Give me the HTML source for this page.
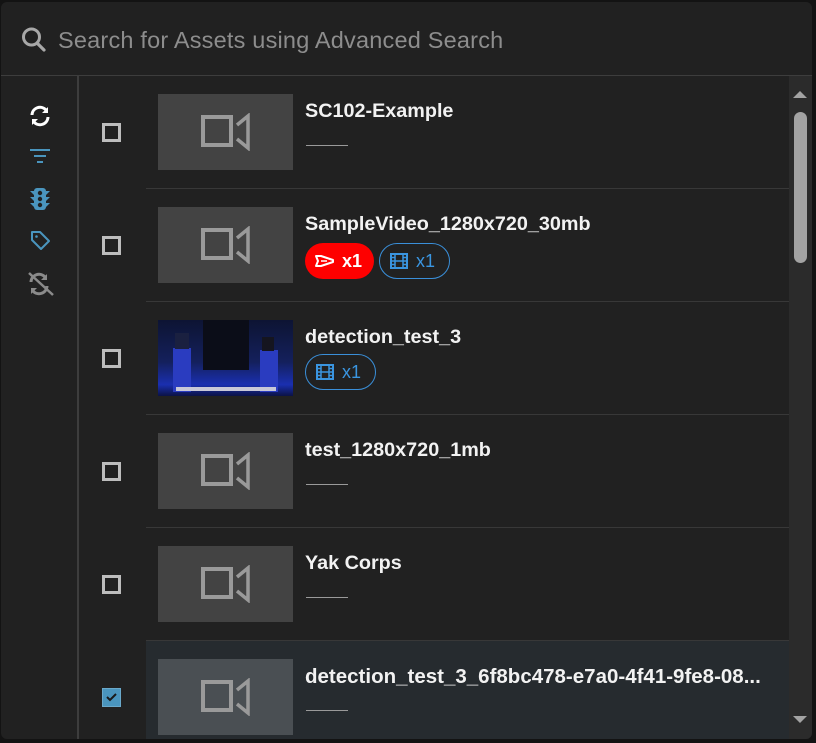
<!DOCTYPE html>
<html><head><meta charset="utf-8"><style>
*{margin:0;padding:0;box-sizing:border-box}
body{width:816px;height:743px;background:#131313;font-family:"Liberation Sans",Roboto,sans-serif;overflow:hidden;position:relative}
.panel{position:absolute;left:1px;top:2px;width:811px;height:737px;background:#212121;border-radius:6px;overflow:hidden}
.a{position:absolute}
.search{left:57px;top:25px;font-size:23.5px;color:#8d8d8d;letter-spacing:0.2px}
.hline{height:1px;background:#3d3d3d}
.row{position:absolute;left:145px;width:643px;height:113px}
.sep{position:absolute;left:145px;width:643px;height:1px;background:#383838}
.thumb{position:absolute;left:12px;top:19px;width:135px;height:76px;background:#434343}
.vr{position:absolute;left:43px;top:21px;width:32px;height:32px;border:4px solid #9a9a9a}
.title{position:absolute;left:159px;top:25px;font-size:19.8px;font-weight:bold;color:#f2f2f2;white-space:nowrap}
.dash{position:absolute;left:160px;top:70px;width:42px;height:1px;background:#9a9a9a}
.cb{position:absolute;left:101px;width:19px;height:19px;border:3px solid #bdbdbd}
.chip{position:absolute;top:243px;height:36px;border-radius:18px;font-size:18px;display:flex;align-items:center}
</style></head><body>
<div class="panel">
 <svg class="a" style="left:20px;top:24px" width="26" height="28" viewBox="0 0 26 28"><circle cx="10.5" cy="11" r="8" fill="none" stroke="#a8a8a8" stroke-width="3"/><line x1="16" y1="17" x2="23" y2="24" stroke="#a8a8a8" stroke-width="3.2" stroke-linecap="round"/></svg>
 <div class="a search">Search for Assets using Advanced Search</div>
 <div class="a hline" style="left:0;top:73px;width:811px"></div>
 <div class="a" style="left:76px;top:73px;width:2px;height:670px;background:#3d3d3d"></div>
 <svg class="a" style="left:27px;top:102px" width="24" height="24" viewBox="0 0 24 24"><path d="M4 11a8 8 0 0 1 14-5" fill="none" stroke="#fff" stroke-width="3"/><path d="M20 3v6h-6z" fill="#fff"/><path d="M20 13a8 8 0 0 1-14 5" fill="none" stroke="#fff" stroke-width="3"/><path d="M4 21v-6h6z" fill="#fff"/></svg>
 <svg class="a" style="left:29px;top:145px" width="22" height="20"><rect x="0" y="2" width="20" height="2" fill="#4a95be"/><rect x="4" y="8" width="12" height="2" fill="#4a95be"/><rect x="7" y="14" width="6" height="2" fill="#4a95be"/></svg>
 <svg class="a" style="left:29px;top:185px" width="22" height="24" viewBox="0 0 22 24"><rect x="4" y="1" width="12" height="22" rx="3" fill="#4a95be"/><path d="M0 4h4v4zM20 4h-4v4zM0 10h4v4zM20 10h-4v4zM0 16h4v4zM20 16h-4v4z" fill="#4a95be"/><circle cx="10" cy="6" r="2.2" fill="#212121"/><circle cx="10" cy="12" r="2.2" fill="#212121"/><circle cx="10" cy="18" r="2.2" fill="#212121"/></svg>
 <svg class="a" style="left:29px;top:228px" width="22" height="22" viewBox="0 0 22 22"><path d="M2 2h8l9 9-8 8-9-9z" fill="none" stroke="#4a95be" stroke-width="2" stroke-linejoin="round"/><circle cx="6.5" cy="6.5" r="1.3" fill="#4a95be"/></svg>
 <svg class="a" style="left:26px;top:270px" width="28" height="24" viewBox="0 0 28 24"><path d="M4 10a8 8 0 0 1 14-5" fill="none" stroke="#8a8a8a" stroke-width="3"/><path d="M20 2v6h-6z" fill="#8a8a8a"/><path d="M20 14a8 8 0 0 1-14 5" fill="none" stroke="#8a8a8a" stroke-width="3"/><path d="M4 22v-6h6z" fill="#8a8a8a"/><line x1="2" y1="1" x2="26" y2="23" stroke="#8a8a8a" stroke-width="2.5"/></svg>
 <div class="sep" style="top:186px"></div><div class="sep" style="top:299px"></div><div class="sep" style="top:412px"></div><div class="sep" style="top:525px"></div><div class="sep" style="top:638px"></div>
 <div class="a" style="left:145px;top:639px;width:643px;height:100px;background:#262b2f"></div>
 <div class="cb" style="top:121px"></div><div class="cb" style="top:234px"></div><div class="cb" style="top:347px"></div><div class="cb" style="top:460px"></div><div class="cb" style="top:573px"></div>
 <div class="a" style="left:101px;top:686px;width:19px;height:19px;background:#4a95be;border:1px solid #6aa9cb"></div>
 <svg class="a" style="left:105px;top:691px" width="11" height="9"><path d="M1 4l3 3 6-6" fill="none" stroke="#1a1a1a" stroke-width="2"/></svg>
 <div class="row" style="top:73px"><div class="thumb"><div class="vr"></div><svg class="a" style="left:77px;top:19px" width="16" height="38"><path d="M2 12L13 3V35L2 26" fill="none" stroke="#9a9a9a" stroke-width="3.5"/></svg></div><div class="title">SC102-Example</div><div class="dash"></div></div>
 <div class="row" style="top:186px"><div class="thumb"><div class="vr"></div><svg class="a" style="left:77px;top:19px" width="16" height="38"><path d="M2 12L13 3V35L2 26" fill="none" stroke="#9a9a9a" stroke-width="3.5"/></svg></div><div class="title">SampleVideo_1280x720_30mb</div></div>
 <div class="row" style="top:299px"><div class="thumb" style="background:linear-gradient(180deg,#0d1433 0%,#14205c 55%,#1a2fb0 85%,#0b1245 100%)">
   <div class="a" style="left:45px;top:0;width:46px;height:50px;background:#0b0d18"></div>
   <div class="a" style="left:15px;top:28px;width:18px;height:44px;background:#2a3cc0"></div>
   <div class="a" style="left:17px;top:13px;width:14px;height:16px;background:#1a2040"></div>
   <div class="a" style="left:102px;top:30px;width:18px;height:42px;background:#2a3cc0"></div>
   <div class="a" style="left:104px;top:17px;width:12px;height:14px;background:#15151f"></div>
   <div class="a" style="left:18px;top:67px;width:100px;height:4px;background:#c8c8d8"></div>
 </div><div class="title">detection_test_3</div></div>
 <div class="row" style="top:412px"><div class="thumb"><div class="vr"></div><svg class="a" style="left:77px;top:19px" width="16" height="38"><path d="M2 12L13 3V35L2 26" fill="none" stroke="#9a9a9a" stroke-width="3.5"/></svg></div><div class="title">test_1280x720_1mb</div><div class="dash"></div></div>
 <div class="row" style="top:525px"><div class="thumb"><div class="vr"></div><svg class="a" style="left:77px;top:19px" width="16" height="38"><path d="M2 12L13 3V35L2 26" fill="none" stroke="#9a9a9a" stroke-width="3.5"/></svg></div><div class="title">Yak Corps</div><div class="dash"></div></div>
 <div class="row" style="top:638px"><div class="thumb" style="background:#4a4f53"><div class="vr"></div><svg class="a" style="left:77px;top:19px" width="16" height="38"><path d="M2 12L13 3V35L2 26" fill="none" stroke="#9a9a9a" stroke-width="3.5"/></svg></div><div class="title" style="font-size:20.5px">detection_test_3_6f8bc478-e7a0-4f41-9fe8-08...</div><div class="dash"></div></div>
 <div class="chip" style="left:304px;top:241px;width:69px;background:#fe0000;color:#fff;font-weight:bold">
  <svg style="margin-left:9px" width="22" height="16" viewBox="0 0 22 16"><path d="M2 3h5l12 4v2L7 13H2l2-5z" fill="none" stroke="#fff" stroke-width="2" stroke-linejoin="round"/><line x1="7" y1="8" x2="13" y2="8" stroke="#fff" stroke-width="1.5"/></svg><span style="margin-left:6px">x1</span></div>
 <div class="chip" style="left:378px;top:241px;width:71px;border:1px solid #3a8fd9;color:#3a95e0">
  <svg style="margin-left:10px" width="18" height="16" viewBox="0 0 18 16"><rect x="1" y="1" width="16" height="14" fill="none" stroke="#3a95e0" stroke-width="2"/><path d="M5 1v14M13 1v14M1 8h16M1 4.5h4M1 11.5h4M13 4.5h4M13 11.5h4" stroke="#3a95e0" stroke-width="1.5"/></svg><span style="margin-left:8px">x1</span></div>
 <div class="chip" style="left:304px;top:352px;width:71px;border:1px solid #3a8fd9;color:#3a95e0">
  <svg style="margin-left:10px" width="18" height="16" viewBox="0 0 18 16"><rect x="1" y="1" width="16" height="14" fill="none" stroke="#3a95e0" stroke-width="2"/><path d="M5 1v14M13 1v14M1 8h16M1 4.5h4M1 11.5h4M13 4.5h4M13 11.5h4" stroke="#3a95e0" stroke-width="1.5"/></svg><span style="margin-left:8px">x1</span></div>
 <div class="a" style="left:788px;top:74px;width:23px;height:665px;background:#2b2b2b"></div>
 <svg class="a" style="left:792px;top:88px" width="14" height="9"><path d="M0 8L7 1L14 8z" fill="#a3a3a3"/></svg>
 <div class="a" style="left:793px;top:110px;width:13px;height:151px;border-radius:7px;background:#a3a3a3"></div>
 <svg class="a" style="left:792px;top:713px" width="14" height="9"><path d="M0 1L7 8L14 1z" fill="#a3a3a3"/></svg>
</div>
</body></html>
